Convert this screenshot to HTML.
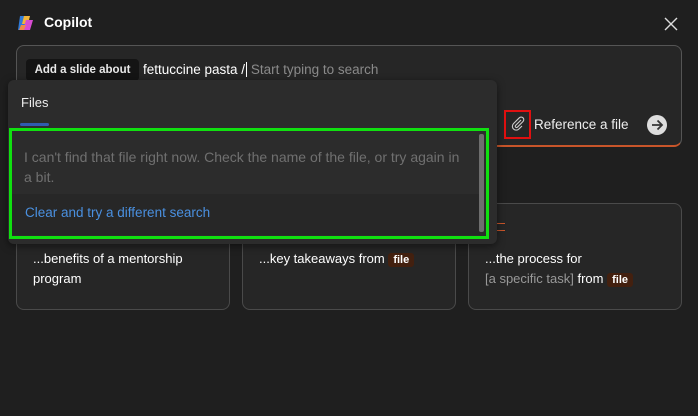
<html><head><style>
body{margin:0;width:698px;height:416px;background:#1f1f1f;font-family:"Liberation Sans",sans-serif;position:relative;overflow:hidden;color:#fff}
.a{position:absolute}
.card{position:absolute;top:203px;width:214px;height:107px;border:1px solid #4a4a4a;border-radius:8px;background:#262626;box-sizing:border-box}
.card p{margin:0;position:absolute;left:16px;top:45px;font-size:13px;line-height:20px;color:#fff}
.tag{background:#43200f;border-radius:3px;padding:1px 5px;font-weight:bold;font-size:11px}
</style></head><body>
<svg class="a" style="left:16px;top:13px" width="20" height="20" viewBox="0 0 20 20"><path d="M4 3h8l-3 14H2z" fill="#2f7ad8"/><path d="M8 3h6l-2 8H6z" fill="#f0b43a"/><path d="M10 7h7l-3 10H7z" fill="#d84cd2"/><path d="M5 12h5l-2 5H3z" fill="#f08a4b"/></svg>
<div class="a" style="left:44px;top:14px;font-size:14px;font-weight:bold">Copilot</div>
<svg class="a" style="left:664px;top:17px" width="14" height="14"><path d="M1 1L13 13M13 1L1 13" stroke="#ddd" stroke-width="1.4"/></svg>
<div class="a" style="left:16px;top:45px;width:666px;height:102px;box-sizing:border-box;border:1px solid #555;border-bottom:2px solid #c8552a;border-radius:8px;background:#262626"></div>
<div class="a" style="left:26px;top:59px;width:113px;height:22px;background:#141414;border-radius:4px;font-size:11.5px;font-weight:bold;color:#e8e8e8;line-height:22px;text-align:center">Add a slide about</div>
<div class="a" style="left:143px;top:62px;font-size:13.5px">fettuccine pasta /<span style="border-left:1px solid #fff;margin-left:1px"></span><span style="color:#8a8a8a"> Start typing to search</span></div>
<div class="a" style="left:504px;top:110px;width:27px;height:29px;box-sizing:border-box;border:2px solid #e01010"></div>
<svg class="a" style="left:510px;top:116px" width="16" height="16" viewBox="0 0 16 16"><path d="M11 4L5.5 9.5a1.3 1.3 0 0 0 1.8 1.8L13 5.5a2.6 2.6 0 0 0-3.7-3.7L3.5 7.6a3.8 3.8 0 0 0 5.4 5.4L12 10" stroke="#ccc" fill="none" stroke-width="1.1"/></svg>
<div class="a" style="left:534px;top:117px;font-size:13.5px;color:#eee">Reference a file</div>
<div class="a" style="left:647px;top:115px;width:20px;height:20px;border-radius:50%;background:#ddd"></div>
<svg class="a" style="left:650px;top:118px" width="14" height="14"><path d="M2 7h10M7.5 2.5L12 7l-4.5 4.5" stroke="#333" stroke-width="1.8" fill="none"/></svg>
<div class="card" style="left:16px"><p>...benefits of a mentorship<br>program</p></div>
<div class="card" style="left:242px"><p>...key takeaways from <span class="tag">file</span></p></div>
<div class="card" style="left:468px"><div class="a" style="left:28px;top:19px;width:8px;height:6px;border-top:1px solid #c8552a;border-bottom:1px solid #c8552a"></div><p>...the process for<br><span style="color:#999">[a specific task]</span> from <span class="tag">file</span></p></div>
<div class="a" style="left:8px;top:80px;width:489px;height:164px;background:#2c2c2c;border-radius:6px;box-shadow:0 2px 8px rgba(0,0,0,.5)"></div>
<div class="a" style="left:21px;top:95px;font-size:13px;color:#eee">Files</div>
<div class="a" style="left:20px;top:123px;width:29px;height:3px;background:#2f5bb0;border-radius:2px"></div>
<div class="a" style="left:12px;top:194px;width:468px;height:41px;background:#272727"></div>
<div class="a" style="left:479px;top:134px;width:5px;height:98px;background:#6e6e6e;border-radius:2px"></div>
<div class="a" style="left:9px;top:128px;width:480px;height:111px;box-sizing:border-box;border:3px solid #10e010"></div>
<div class="a" style="left:24px;top:147px;width:460px;font-size:14px;line-height:20px;color:#707070;white-space:nowrap">I can't find that file right now. Check the name of the file, or try again in<br>a bit.</div>
<div class="a" style="left:25px;top:205px;font-size:13.5px;color:#4a90e0">Clear and try a different search</div>
</body></html>
